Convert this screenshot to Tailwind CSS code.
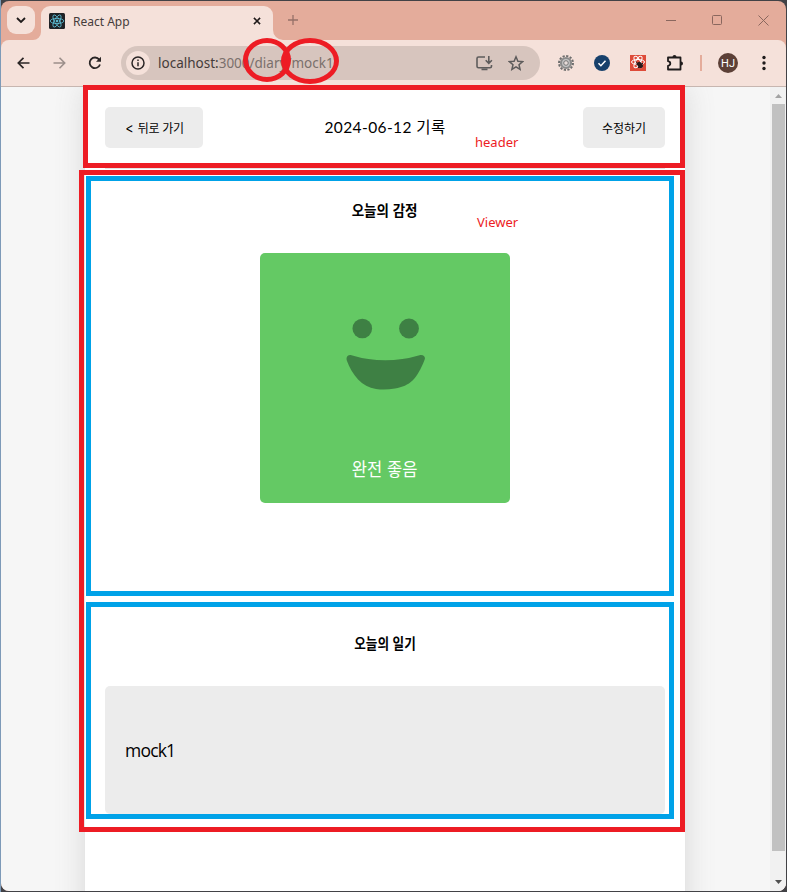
<!DOCTYPE html>
<html lang="ko">
<head>
<meta charset="utf-8">
<title>React App</title>
<script src="https://cdn.jsdelivr.net/npm/@tailwindcss/browser@4"></script>
</head>
<body class="w-[787px] h-[892px] overflow-hidden bg-[#424246] font-['Noto_Sans','Noto_Sans_CJK_KR',sans-serif]">
<div class="relative w-[787px] h-[892px] pl-px pt-px bg-linear-to-r from-[#7d9ab8] from-[1px] to-[#424246] to-[1px]">
  <div class="w-[785px] h-[890px] rounded-[8px] overflow-hidden bg-[#e4ac9b] flex flex-col">
    <!-- tab strip -->
    <div class="h-[39px] shrink-0 flex items-start">
      <div class="mt-[5px] ml-[6px] size-7 rounded-[9px] bg-[#f5e1da] flex items-center justify-center">
        <svg width="10" height="8" viewBox="0 0 10 8" fill="none" stroke="#1f1a1a" stroke-width="1.8"><path d="M1 2l4 4 4-4"/></svg>
      </div>
      <div class="relative mt-[5px] ml-[6px] w-[232px] h-[34px] rounded-t-[9px] bg-[#f5e1da] flex items-center pl-2 pr-[12px] pb-[5px]">
        <svg class="absolute -left-2 bottom-0" width="8" height="8"><path d="M8 0v8H0a8 8 0 0 0 8-8" fill="#f5e1da"/></svg>
        <svg class="absolute -right-[10px] bottom-0" width="10" height="10"><path d="M0 0v10h10A10 10 0 0 1 0 0" fill="#f5e1da"/></svg>
        <svg width="16" height="16" viewBox="0 0 16 16" fill="none" stroke="#61c5dd" stroke-width=".8"><rect width="16" height="16" rx="1.5" fill="#202226" stroke="none"/><ellipse cx="8" cy="8" rx="6.8" ry="2.6"/><ellipse cx="8" cy="8" rx="6.8" ry="2.6" transform="rotate(60 8 8)"/><ellipse cx="8" cy="8" rx="6.8" ry="2.6" transform="rotate(120 8 8)"/><circle cx="8" cy="8" r="1" fill="#61c5dd"/></svg>
        <span class="ml-2 text-[12px] leading-4 text-[#453c3a] pt-[2px]">React App</span>
        <svg class="ml-auto" width="8" height="8" viewBox="0 0 9 9" stroke="#1f1a1a" stroke-width="1.7"><path d="M1 1l7 7M8 1L1 8"/></svg>
      </div>
      <svg class="mt-[14px] ml-[15px]" width="10" height="10" viewBox="0 0 10 10" stroke="#957068" stroke-width="1.3"><path d="M5 0v10M0 5h10"/></svg>
      <div class="ml-auto mr-[17px] mt-[14px] flex text-[#8a675e]">
        <svg width="10" height="11" stroke="currentColor"><path d="M0 5.5h10"/></svg>
        <svg class="ml-9" width="11" height="11" fill="none" stroke="currentColor"><rect x=".5" y=".5" width="9" height="9" rx="1"/></svg>
        <svg class="ml-[35px]" width="11" height="11" stroke="currentColor"><path d="M.5 .5l10 10M10.500 .5l-10 10"/></svg>
      </div>
    </div>
    <!-- toolbar -->
    <div class="h-[47px] shrink-0 rounded-t-[8px] bg-[#f5e1da] border-b border-[#c7b6b0] flex items-center">
      <svg class="ml-4" width="13" height="12" viewBox="0 0 13 12" fill="none" stroke="#2b2626" stroke-width="1.7"><path d="M12.500 6H1.500M6.500 .8L1.300 6l5.200 5.200"/></svg>
      <svg class="ml-[23px]" width="13" height="12" viewBox="0 0 13 12" fill="none" stroke="#9c8f8b" stroke-width="1.6"><path d="M.5 6h11M6.500 .8L11.700 6l-5.200 5.200"/></svg>
      <svg class="ml-[22px]" width="14" height="14" viewBox="0 0 14 14" fill="none" stroke="#2b2626" stroke-width="1.8"><path d="M12 8.500A5.300 5.300 0 1 1 11.200 3.600"/><path d="M13 .8v5H8z" fill="#2b2626" stroke="none"/></svg>
      <div class="ml-[19px] w-[419px] h-[34px] rounded-full bg-[#d7c5be] flex items-center pl-[5px] pr-4">
        <div class="size-6 rounded-full bg-[#f5e1da] flex items-center justify-center">
          <svg width="14" height="14" viewBox="0 0 14 14" fill="none" stroke="#2b2626" stroke-width="1.5"><circle cx="7" cy="7" r="6"/><path d="M7 6.200v4M7 3.500v1.500"/></svg>
        </div>
        <span class="ml-2 text-[13.500px] leading-5 text-[#7a706c] whitespace-nowrap"><span class="text-[#453c3a]">localhost:</span>3000/diary/mock1</span>
        <svg class="ml-auto" width="17" height="15" viewBox="0 0 17 15" fill="none" stroke="#5e5c5c" stroke-width="1.6"><path d="M9 1H2.500Q1 1 1 2.500v7.700q0 1.500 1.500 1.500H14q1.500 0 1.500-1.500V9M5.500 13.500h6M12.800 0v7M9.700 4.300l3.100 3 3.100-3"/></svg>
        <svg class="ml-[15px]" width="16" height="16" viewBox="0 0 16 16" fill="none" stroke="#5e5c5c" stroke-width="1.5"><path d="M8 1.800l1.900 4.400 4.700.4-3.600 3.100 1.100 4.700L8 11.900l-4.100 2.500L5 9.700 1.400 6.600l4.700-.4z"/></svg>
      </div>
      <svg class="ml-[18px]" width="16" height="16" viewBox="0 0 16 16"><circle cx="8" cy="8" r="7" fill="none" stroke="#6e6e6e" stroke-width="2" stroke-dasharray="2.200 1.460"/><circle cx="8" cy="8" r="5" fill="#c4c4c4" stroke="#8b8b8b" stroke-width="2.200"/><circle cx="8" cy="8" r="2.300" fill="#e7dcd9" stroke="#777"/></svg>
      <svg class="ml-5" width="16" height="16" viewBox="0 0 16 16"><circle cx="8" cy="8" r="8" fill="#17406b"/><path d="M4.500 8.200l2.400 2.500 4.600-5" fill="none" stroke="#fff" stroke-width="1.5"/></svg>
      <svg class="ml-5" width="16" height="16" viewBox="0 0 16 16" fill="none" stroke="#fff"><rect width="16" height="16" fill="#de4b39" stroke="none"/><ellipse cx="8" cy="7" rx="6.500" ry="2.500"/><ellipse cx="8" cy="7" rx="6.500" ry="2.500" transform="rotate(60 8 7)"/><ellipse cx="8" cy="7" rx="6.500" ry="2.500" transform="rotate(120 8 7)"/><ellipse cx="10" cy="10" rx="2.400" ry="3.400" transform="rotate(-35 10 10)" fill="#28191a" stroke="none"/><path d="M6 9l7 2M8 13l5-5M6 6.500l5 6" stroke="#28191a"/></svg>
      <svg class="ml-5" width="18" height="18" viewBox="0 0 18 18" fill="none" stroke="#201c1c" stroke-width="1.800"><path d="M2 3.500h12.500v12H2v-3.700q2.300-.5 2.300-2.300T2 7.200z" stroke-linejoin="round"/><path d="M6.500 3a2 2 0 0 1 4 0zM15 7.500a2 2 0 0 1 0 4z" fill="#201c1c" stroke="none"/></svg>
      <div class="ml-4 w-[2px] h-4 bg-[#e4ac9b]"></div>
      <div class="ml-4 size-5 rounded-full bg-[#5c4037] text-white text-[11px] leading-[21px] text-center font-[Roboto]">HJ</div>
      <svg class="ml-[23px]" width="6" height="16" fill="#201c1c"><circle cx="3" cy="2.500" r="1.700"/><circle cx="3" cy="8" r="1.700"/><circle cx="3" cy="13.500" r="1.700"/></svg>
    </div>
    <!-- page -->
    <div class="flex-1 min-h-0 flex bg-[#f6f6f6]">
      <div class="flex-1 overflow-hidden pl-[84px]">
        <main class="w-[600px] h-[1000px] bg-white px-5 shadow-[0_0_29px_rgba(100,100,100,0.2)] text-black font-['Noto_Sans_CJK_KR',sans-serif]">
          <header class="h-[82px] border-b border-[#e2e2e2] flex items-center">
            <button class="w-[98px] h-[41px] rounded-[5px] bg-[#ececec] text-[12px] flex items-center pl-[21px]">
              <span class="inline-block scale-y-[1.4]">&lt;</span>
              <span class="ml-[5px] whitespace-nowrap tracking-[-.3px]">뒤로 가기</span>
            </button>
            <h1 class="w-[364px] text-[15.500px] leading-6 text-center whitespace-nowrap -translate-y-px"><span class="font-['Lato','Noto_Sans_CJK_KR',sans-serif] tracking-[.4px]">2024-06-12 기록</span></h1>
            <button class="ml-[16px] w-[82px] h-[41px] rounded-[5px] bg-[#ececec] text-[12px]">수정하기</button>
          </header>
          <section class="h-[434px] flex flex-col items-center pt-[29px]">
            <h2 class="text-[15px] leading-6 font-bold scale-x-[.9]">오늘의 감정</h2>
            <div class="mt-[31px] size-[250px] rounded-[5px] bg-[#64c964] flex flex-col items-center">
              <svg class="mt-[65px] shrink-0" width="80" height="74" viewBox="0 0 80 74" fill="#3e8044"><circle cx="17.300" cy="10.500" r="9.800"/><circle cx="64" cy="10.500" r="9.900"/><path d="M6.500 37.200Q40 47.500 74.500 37.200C78.500 36.100 81 39 79.500 42C72 61 65 68 50 70.500Q40 72.300 31 71C17 69 7 57 1.800 42.500C.7 39 3 36.300 6.500 37.200z"/></svg>
              <p class="mt-[62px] text-[18px] leading-7 text-white whitespace-nowrap scale-x-[.92]">완전 좋음</p>
            </div>
          </section>
          <section class="pt-[28px]">
            <h2 class="text-[15px] leading-6 font-bold text-center scale-x-[.84]">오늘의 일기</h2>
            <div class="mt-[31px] h-[128px] rounded-[5px] bg-[#ececec] px-5 pt-[50px]">
              <p class="text-[17.500px] leading-7 font-['Open_Sans',sans-serif] tracking-[-.8px]">mock1</p>
            </div>
          </section>
        </main>
      </div>
      <div class="w-[16px] shrink-0 bg-[#f1f1f1] flex flex-col items-center">
        <svg class="mt-[7px]" width="7" height="4"><path d="M0 4L3.500 0 7 4z" fill="#a3a3a3"/></svg>
        <div class="mt-[6px] w-[13px] h-[747px] bg-[#c1c1c1]"></div>
        <svg class="mt-[29px]" width="7" height="4"><path d="M0 0l3.500 4L7 0z" fill="#505050"/></svg>
      </div>
    </div>
  </div>
  <!-- annotations over the window -->
  <div class="absolute left-[83px] top-[85px] w-[602px] h-[83px] border-5 border-[#ed1c24]"></div>
  <div class="absolute left-[79px] top-[170px] w-[606px] h-[662px] border-5 border-[#ed1c24]"></div>
  <div class="absolute left-[86px] top-[176px] w-[588px] h-[420px] border-5 border-[#00a2e8]"></div>
  <div class="absolute left-[86px] top-[602px] w-[588px] h-[217px] border-5 border-[#00a2e8]"></div>
  <div class="absolute left-[243px] top-[38px] w-[48px] h-[44px] rounded-[50%] border-5 border-[#ed1c24]"></div>
  <div class="absolute left-[281px] top-[38px] w-[58px] h-[46px] rounded-[50%] border-5 border-[#ed1c24]"></div>
  <span class="absolute left-[475px] top-[132px] text-[13px] leading-5 text-[#ed1c24]">header</span>
  <span class="absolute left-[477px] top-[212px] text-[13px] leading-5 text-[#ed1c24]">Viewer</span>
</div>
</body>
</html>
